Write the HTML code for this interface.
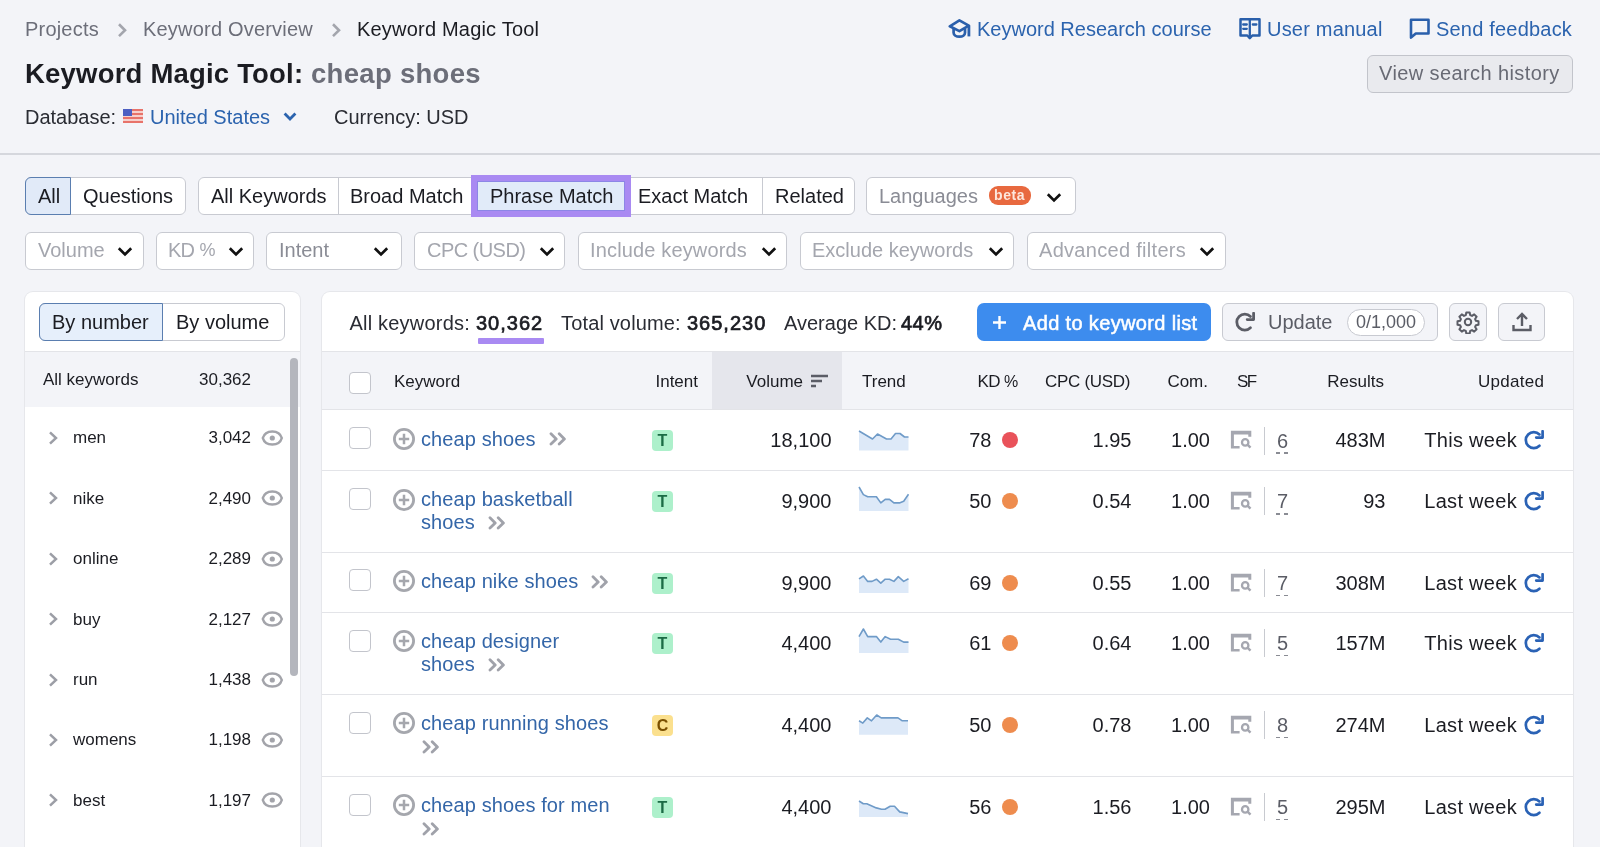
<!DOCTYPE html>
<html><head><meta charset="utf-8">
<style>
*{box-sizing:border-box;margin:0;padding:0}
html,body{width:1600px;height:847px;overflow:hidden;background:#f3f4f8;font-family:"Liberation Sans",sans-serif;color:#1b1c22}
.a{position:absolute}
#root{position:absolute;left:0;top:0;width:1600px;height:847px;will-change:transform}
.t{position:absolute;white-space:nowrap;line-height:1}
.bc{font-size:20px;color:#6c6e79;letter-spacing:0.2px}
.lnk{color:#2b63ae}
.btn{position:absolute;border:1px solid #c8cad1;border-radius:6px;background:#fff}
.seg{position:absolute;top:0;height:100%;border-left:1px solid #c8cad1}
.ph{color:#a4a6ae}
.chev{position:absolute}
</style></head><body><div id="root">

<!-- breadcrumbs -->
<div class="t bc" style="left:25px;top:19px">Projects</div>
<svg class="a" style="left:117px;top:23px" width="11" height="15" viewBox="0 0 11 15"><path d="M2 1.3L8 7.2 2 13.1" fill="none" stroke="#a3a5ad" stroke-width="2.6"/></svg>
<div class="t bc" style="left:143px;top:19px">Keyword Overview</div>
<svg class="a" style="left:331px;top:23px" width="11" height="15" viewBox="0 0 11 15"><path d="M2 1.3L8 7.2 2 13.1" fill="none" stroke="#a3a5ad" stroke-width="2.6"/></svg>
<div class="t bc" style="left:357px;top:19px;color:#1b1c22">Keyword Magic Tool</div>

<!-- top right links -->
<svg class="a" style="left:948px;top:18px" width="24" height="21" viewBox="0 0 24 21"><path d="M1.8 8.3L11.4 2.4l9.4 5.2-9.4 5.5z" fill="none" stroke="#2a5fab" stroke-width="2.7" stroke-linejoin="round"/><path d="M5.6 10.5v4.3c0 2.4 2.6 3.9 5.8 3.9s5.6-1.5 5.6-3.9v-4.3" fill="none" stroke="#2a5fab" stroke-width="2.7"/><path d="M20.9 7.6v10.8" stroke="#2a5fab" stroke-width="2.8"/></svg>
<div class="t bc lnk" style="left:977px;top:19px;letter-spacing:0">Keyword Research course</div>
<svg class="a" style="left:1238px;top:18px" width="24" height="23" viewBox="0 0 24 23"><path d="M2.5 1.3h19v16.2h-7.2l-2.5 2.6-2.5-2.6H2.5z" fill="none" stroke="#2a5fab" stroke-width="2.5" stroke-linejoin="round"/><path d="M11.8 1.3v16.5M5.2 6.5h3.6M5.2 10.8h3.6M14.8 6.5h3.6" stroke="#2a5fab" stroke-width="2.3" stroke-linecap="round"/></svg>
<div class="t bc lnk" style="left:1267px;top:19px">User manual</div>
<svg class="a" style="left:1408px;top:17.5px" width="23" height="22" viewBox="0 0 23 22"><path d="M3 1.8h17.5v13.7H7.8L3 19.6z" fill="none" stroke="#2a5fab" stroke-width="2.6" stroke-linejoin="round"/></svg>
<div class="t bc lnk" style="left:1436px;top:19px">Send feedback</div>

<!-- title -->
<div class="t" style="left:25px;top:60px;font-size:27.5px;letter-spacing:0.2px;font-weight:bold;color:#1b1c22">Keyword Magic Tool:</div>
<div class="t" style="left:311px;top:60px;letter-spacing:0.3px;font-size:27.5px;font-weight:bold;color:#6c6e79">cheap shoes</div>

<div class="btn" style="left:1367px;top:54.5px;width:206px;height:38px;background:#e9eaee;border-color:#c2c4cb"></div>
<div class="t" style="left:1379px;top:63px;font-size:20px;letter-spacing:0.4px;color:#686a74">View search history</div>

<!-- database -->
<div class="t" style="left:25px;top:107px;font-size:20px;color:#2a2c33">Database:</div>
<svg class="a" style="left:123px;top:109px" width="20" height="14" viewBox="0 0 20 14"><rect width="20" height="14" fill="#e8736a"/><rect y="2" width="20" height="2" fill="#f6d0cc"/><rect y="6" width="20" height="2" fill="#f6d0cc"/><rect y="10" width="20" height="2" fill="#f6d0cc"/><rect width="9" height="7" fill="#4d5fc2"/></svg>
<div class="t lnk" style="left:150px;top:107px;font-size:20px">United States</div>
<svg class="a" style="left:283px;top:112px" width="14" height="9" viewBox="0 0 14 9"><path d="M1.6 1.6l5.4 5.4 5.4-5.4" fill="none" stroke="#2b63ae" stroke-width="2.8"/></svg>
<div class="t" style="left:334px;top:107px;font-size:20px;color:#2a2c33">Currency: USD</div>

<div class="a" style="left:0;top:153px;width:1600px;height:2px;background:#d5d7dd"></div>


<!-- tabs row -->
<div class="btn" style="left:25px;top:177px;width:161px;height:38px"></div>
<div class="a" style="left:25px;top:177px;width:46px;height:38px;background:#e1eaf8;border:1px solid #5a7eb0;border-radius:6px 0 0 6px"></div>
<div class="t" style="left:38px;top:186px;font-size:20px">All</div>
<div class="t" style="left:83px;top:186px;font-size:20px">Questions</div>

<div class="btn" style="left:198px;top:177px;width:657px;height:38px"></div>
<div class="a" style="left:338px;top:177px;width:1px;height:38px;background:#c8cad1"></div>
<div class="a" style="left:762px;top:177px;width:1px;height:38px;background:#c8cad1"></div>
<div class="t" style="left:211px;top:186px;font-size:20px">All Keywords</div>
<div class="t" style="left:350px;top:186px;font-size:20px">Broad Match</div>
<div class="a" style="left:471px;top:175px;width:160px;height:42px;background:#e1ebf9;border:6px solid #a98af2"></div>
<div class="a" style="left:477px;top:181px;width:148px;height:30px;border:1px solid #8c86e6"></div>
<div class="t" style="left:490px;top:186px;font-size:20px">Phrase Match</div>
<div class="t" style="left:638px;top:186px;font-size:20px">Exact Match</div>
<div class="t" style="left:775px;top:186px;font-size:20px">Related</div>

<div class="btn" style="left:866px;top:177px;width:210px;height:38px"></div>
<div class="t" style="left:879px;top:186px;font-size:20px;color:#8a8c95">Languages</div>
<div class="a" style="left:989px;top:186px;width:42px;height:19px;border-radius:9px;background:#e8693f"></div>
<div class="t" style="left:994px;top:188px;font-size:14px;font-weight:bold;color:#fde7dc;letter-spacing:0.6px">beta</div>
<svg class="a" style="left:1046px;top:192px" width="16" height="11" viewBox="0 0 16 11"><path d="M1.8 2.2l6.2 6.2 6.2-6.2" fill="none" stroke="#111" stroke-width="2.7"/></svg>

<!-- filters row -->
<div class="btn" style="left:25px;top:232px;width:119px;height:38px"></div>
<div class="t" style="left:38px;top:240px;font-size:20px;color:#a4a6ae">Volume</div>
<svg class="a" style="left:117px;top:246px" width="16" height="11" viewBox="0 0 16 11"><path d="M1.8 2.2l6.2 6.2 6.2-6.2" fill="none" stroke="#111" stroke-width="2.7"/></svg>
<div class="btn" style="left:156px;top:232px;width:98px;height:38px"></div>
<div class="t" style="left:168px;top:240px;font-size:20px;letter-spacing:-0.8px;color:#a4a6ae">KD</div><div class="t" style="left:199.5px;top:241px;font-size:18px;color:#a4a6ae">%</div>
<svg class="a" style="left:228px;top:246px" width="16" height="11" viewBox="0 0 16 11"><path d="M1.8 2.2l6.2 6.2 6.2-6.2" fill="none" stroke="#111" stroke-width="2.7"/></svg>
<div class="btn" style="left:266px;top:232px;width:136px;height:38px"></div>
<div class="t" style="left:279px;top:240px;font-size:20px;color:#8a8c95">Intent</div>
<svg class="a" style="left:373px;top:246px" width="16" height="11" viewBox="0 0 16 11"><path d="M1.8 2.2l6.2 6.2 6.2-6.2" fill="none" stroke="#111" stroke-width="2.7"/></svg>
<div class="btn" style="left:414px;top:232px;width:151px;height:38px"></div>
<div class="t" style="left:427px;top:240px;font-size:20px;letter-spacing:-0.55px;color:#a4a6ae">CPC (USD)</div>
<svg class="a" style="left:539px;top:246px" width="16" height="11" viewBox="0 0 16 11"><path d="M1.8 2.2l6.2 6.2 6.2-6.2" fill="none" stroke="#111" stroke-width="2.7"/></svg>
<div class="btn" style="left:578px;top:232px;width:209px;height:38px"></div>
<div class="t" style="left:590px;top:240px;font-size:20px;letter-spacing:0.15px;color:#a4a6ae">Include keywords</div>
<svg class="a" style="left:761px;top:246px" width="16" height="11" viewBox="0 0 16 11"><path d="M1.8 2.2l6.2 6.2 6.2-6.2" fill="none" stroke="#111" stroke-width="2.7"/></svg>
<div class="btn" style="left:800px;top:232px;width:214px;height:38px"></div>
<div class="t" style="left:812px;top:240px;font-size:20px;color:#a4a6ae">Exclude keywords</div>
<svg class="a" style="left:988px;top:246px" width="16" height="11" viewBox="0 0 16 11"><path d="M1.8 2.2l6.2 6.2 6.2-6.2" fill="none" stroke="#111" stroke-width="2.7"/></svg>
<div class="btn" style="left:1027px;top:232px;width:199px;height:38px"></div>
<div class="t" style="left:1039px;top:240px;font-size:20px;letter-spacing:0.3px;color:#a4a6ae">Advanced filters</div>
<svg class="a" style="left:1199px;top:246px" width="16" height="11" viewBox="0 0 16 11"><path d="M1.8 2.2l6.2 6.2 6.2-6.2" fill="none" stroke="#111" stroke-width="2.7"/></svg>

<!-- left panel -->
<div class="a" style="left:25px;top:292px;width:275px;height:600px;background:#fff;border-radius:8px;box-shadow:0 0 0 1px #e6e7eb"></div>
<div class="btn" style="left:39px;top:303px;width:246px;height:38px"></div>
<div class="a" style="left:39px;top:303px;width:124px;height:38px;background:#e6effb;border:1px solid #5a7eb0;border-radius:6px 0 0 6px"></div>
<div class="t" style="left:52px;top:312px;font-size:20px">By number</div>
<div class="t" style="left:176px;top:312px;font-size:20px">By volume</div>
<div class="a" style="left:25px;top:351px;width:275px;height:1px;background:#e3e4e8"></div>
<div class="a" style="left:25px;top:352px;width:275px;height:55px;background:#f3f4f8"></div>
<div class="t" style="left:43px;top:371px;font-size:17px">All keywords</div>
<div class="t" style="left:151px;top:371px;width:100px;text-align:right;font-size:17px">30,362</div>
<div class="a" style="left:290px;top:358px;width:8px;height:318px;border-radius:4px;background:#b4b6bd"></div>
<svg class="a" style="left:48px;top:431px" width="10" height="14" viewBox="0 0 10 14"><path d="M2 1.3L8 7 2 12.7" fill="none" stroke="#9c9ea6" stroke-width="2.5"/></svg>
<div class="t" style="left:73px;top:429px;font-size:17px">men</div>
<div class="t" style="left:151px;top:429px;width:100px;text-align:right;font-size:17px">3,042</div>
<svg class="a" style="left:261px;top:430px" width="23" height="16" viewBox="0 0 23 16"><path d="M1.8 8C3 3.8 6.5 1.4 11.3 1.4S19.6 3.8 20.8 8C19.6 12.2 16.1 14.6 11.3 14.6S3 12.2 1.8 8z" fill="none" stroke="#a3a4aa" stroke-width="2.5"/><circle cx="11.3" cy="8" r="2.6" fill="#a3a4aa"/></svg>
<svg class="a" style="left:48px;top:491px" width="10" height="14" viewBox="0 0 10 14"><path d="M2 1.3L8 7 2 12.7" fill="none" stroke="#9c9ea6" stroke-width="2.5"/></svg>
<div class="t" style="left:73px;top:490px;font-size:17px">nike</div>
<div class="t" style="left:151px;top:490px;width:100px;text-align:right;font-size:17px">2,490</div>
<svg class="a" style="left:261px;top:490px" width="23" height="16" viewBox="0 0 23 16"><path d="M1.8 8C3 3.8 6.5 1.4 11.3 1.4S19.6 3.8 20.8 8C19.6 12.2 16.1 14.6 11.3 14.6S3 12.2 1.8 8z" fill="none" stroke="#a3a4aa" stroke-width="2.5"/><circle cx="11.3" cy="8" r="2.6" fill="#a3a4aa"/></svg>
<svg class="a" style="left:48px;top:552px" width="10" height="14" viewBox="0 0 10 14"><path d="M2 1.3L8 7 2 12.7" fill="none" stroke="#9c9ea6" stroke-width="2.5"/></svg>
<div class="t" style="left:73px;top:550px;font-size:17px">online</div>
<div class="t" style="left:151px;top:550px;width:100px;text-align:right;font-size:17px">2,289</div>
<svg class="a" style="left:261px;top:551px" width="23" height="16" viewBox="0 0 23 16"><path d="M1.8 8C3 3.8 6.5 1.4 11.3 1.4S19.6 3.8 20.8 8C19.6 12.2 16.1 14.6 11.3 14.6S3 12.2 1.8 8z" fill="none" stroke="#a3a4aa" stroke-width="2.5"/><circle cx="11.3" cy="8" r="2.6" fill="#a3a4aa"/></svg>
<svg class="a" style="left:48px;top:612px" width="10" height="14" viewBox="0 0 10 14"><path d="M2 1.3L8 7 2 12.7" fill="none" stroke="#9c9ea6" stroke-width="2.5"/></svg>
<div class="t" style="left:73px;top:611px;font-size:17px">buy</div>
<div class="t" style="left:151px;top:611px;width:100px;text-align:right;font-size:17px">2,127</div>
<svg class="a" style="left:261px;top:611px" width="23" height="16" viewBox="0 0 23 16"><path d="M1.8 8C3 3.8 6.5 1.4 11.3 1.4S19.6 3.8 20.8 8C19.6 12.2 16.1 14.6 11.3 14.6S3 12.2 1.8 8z" fill="none" stroke="#a3a4aa" stroke-width="2.5"/><circle cx="11.3" cy="8" r="2.6" fill="#a3a4aa"/></svg>
<svg class="a" style="left:48px;top:673px" width="10" height="14" viewBox="0 0 10 14"><path d="M2 1.3L8 7 2 12.7" fill="none" stroke="#9c9ea6" stroke-width="2.5"/></svg>
<div class="t" style="left:73px;top:671px;font-size:17px">run</div>
<div class="t" style="left:151px;top:671px;width:100px;text-align:right;font-size:17px">1,438</div>
<svg class="a" style="left:261px;top:672px" width="23" height="16" viewBox="0 0 23 16"><path d="M1.8 8C3 3.8 6.5 1.4 11.3 1.4S19.6 3.8 20.8 8C19.6 12.2 16.1 14.6 11.3 14.6S3 12.2 1.8 8z" fill="none" stroke="#a3a4aa" stroke-width="2.5"/><circle cx="11.3" cy="8" r="2.6" fill="#a3a4aa"/></svg>
<svg class="a" style="left:48px;top:733px" width="10" height="14" viewBox="0 0 10 14"><path d="M2 1.3L8 7 2 12.7" fill="none" stroke="#9c9ea6" stroke-width="2.5"/></svg>
<div class="t" style="left:73px;top:731px;font-size:17px">womens</div>
<div class="t" style="left:151px;top:731px;width:100px;text-align:right;font-size:17px">1,198</div>
<svg class="a" style="left:261px;top:732px" width="23" height="16" viewBox="0 0 23 16"><path d="M1.8 8C3 3.8 6.5 1.4 11.3 1.4S19.6 3.8 20.8 8C19.6 12.2 16.1 14.6 11.3 14.6S3 12.2 1.8 8z" fill="none" stroke="#a3a4aa" stroke-width="2.5"/><circle cx="11.3" cy="8" r="2.6" fill="#a3a4aa"/></svg>
<svg class="a" style="left:48px;top:793px" width="10" height="14" viewBox="0 0 10 14"><path d="M2 1.3L8 7 2 12.7" fill="none" stroke="#9c9ea6" stroke-width="2.5"/></svg>
<div class="t" style="left:73px;top:792px;font-size:17px">best</div>
<div class="t" style="left:151px;top:792px;width:100px;text-align:right;font-size:17px">1,197</div>
<svg class="a" style="left:261px;top:792px" width="23" height="16" viewBox="0 0 23 16"><path d="M1.8 8C3 3.8 6.5 1.4 11.3 1.4S19.6 3.8 20.8 8C19.6 12.2 16.1 14.6 11.3 14.6S3 12.2 1.8 8z" fill="none" stroke="#a3a4aa" stroke-width="2.5"/><circle cx="11.3" cy="8" r="2.6" fill="#a3a4aa"/></svg>

<!-- right panel -->
<div class="a" style="left:322px;top:292px;width:1251px;height:600px;background:#fff;border-radius:8px;box-shadow:0 0 0 1px #e6e7eb"></div>
<div class="t" style="left:349.5px;top:313px;font-size:20px;letter-spacing:0.2px;color:#2a2c33">All keywords:</div>
<div class="t" style="left:476px;top:313px;font-size:20px;letter-spacing:1px;-webkit-text-stroke:0.7px #1b1c22;color:#1b1c22">30,362</div>
<div class="a" style="left:478px;top:338px;width:66px;height:6px;background:#a98af2;border-radius:1px"></div>
<div class="t" style="left:561px;top:313px;font-size:20px;letter-spacing:0.15px;color:#2a2c33">Total volume:</div>
<div class="t" style="left:687px;top:313px;font-size:20px;letter-spacing:1px;-webkit-text-stroke:0.7px #1b1c22;color:#1b1c22">365,230</div>
<div class="t" style="left:784px;top:313px;font-size:20px;color:#2a2c33">Average KD:</div>
<div class="t" style="left:901px;top:313px;font-size:20px;letter-spacing:0.5px;-webkit-text-stroke:0.7px #1b1c22;color:#1b1c22">44%</div>

<div class="a" style="left:977px;top:303px;width:234px;height:38px;background:#3d8cee;border-radius:7px"></div>
<svg class="a" style="left:992px;top:315px" width="15" height="15" viewBox="0 0 15 15"><path d="M7.5 1v13M1 7.5h13" stroke="#fff" stroke-width="2.4"/></svg>
<div class="t" style="left:1023px;top:313px;font-size:20px;color:#fff;letter-spacing:0.35px;-webkit-text-stroke:0.5px #fff">Add to keyword list</div>

<div class="btn" style="left:1222px;top:303px;width:216px;height:38px;background:#f3f4f8"></div>
<svg class="a" style="left:1234px;top:312.3px" width="22" height="21" viewBox="0 0 22 21"><path d="M16.46 4.44A8 8 0 1 0 16.46 15.76" fill="none" stroke="#5b5d66" stroke-width="2.8" stroke-linecap="round"/><path d="M19.6 1.2V7.6H13.2" fill="none" stroke="#5b5d66" stroke-width="2.8" stroke-linecap="round" stroke-linejoin="round"/></svg>
<div class="t" style="left:1268px;top:312px;font-size:20px;color:#5b5d66">Update</div>
<div class="a" style="left:1347px;top:309px;width:78px;height:27px;border:1px solid #c8cad1;border-radius:14px;background:#fff"></div>
<div class="t" style="left:1356px;top:313px;font-size:18px;color:#5b5d66">0/1,000</div>

<div class="btn" style="left:1449px;top:303px;width:38px;height:38px;background:#f3f4f8"></div>
<svg class="a" style="left:1456px;top:310px" width="24" height="24" viewBox="0 0 24 24"><path d="M10.3 2.5h3.4l.5 2.6 1.8.8 2.2-1.5 2.4 2.4-1.5 2.2.8 1.8 2.6.5v3.4l-2.6.5-.8 1.8 1.5 2.2-2.4 2.4-2.2-1.5-1.8.8-.5 2.6h-3.4l-.5-2.6-1.8-.8-2.2 1.5-2.4-2.4 1.5-2.2-.8-1.8-2.6-.5v-3.4l2.6-.5.8-1.8-1.5-2.2 2.4-2.4 2.2 1.5 1.8-.8z" fill="none" stroke="#5b5d66" stroke-width="2" stroke-linejoin="round"/><circle cx="12" cy="12" r="3.2" fill="none" stroke="#5b5d66" stroke-width="2"/></svg>
<div class="btn" style="left:1498px;top:303px;width:47px;height:38px;background:#f3f4f8"></div>
<svg class="a" style="left:1511px;top:311px" width="22" height="22" viewBox="0 0 22 22"><path d="M11 15V3M6 8l5-5 5 5" fill="none" stroke="#5b5d66" stroke-width="2.4"/><path d="M2.5 14v5h17v-5" fill="none" stroke="#5b5d66" stroke-width="2.4"/></svg>

<!-- table header -->
<div class="a" style="left:322px;top:351px;width:1251px;height:1px;background:#e3e4e8"></div>
<div class="a" style="left:322px;top:352px;width:1251px;height:57px;background:#f3f4f8"></div>
<div class="a" style="left:712px;top:352px;width:130px;height:57px;background:#e5e6ec"></div>
<div class="a" style="left:322px;top:409px;width:1251px;height:1px;background:#e3e4e8"></div>
<div class="a" style="left:349px;top:372px;width:22px;height:22px;border:1.5px solid #c3c5cc;border-radius:4px;background:#fff"></div>
<div class="t" style="left:394px;top:373px;font-size:17px">Keyword</div>
<div class="t" style="left:548px;top:373px;width:150px;text-align:right;font-size:17px">Intent</div>
<div class="t" style="left:653px;top:373px;width:150px;text-align:right;font-size:17px">Volume</div>
<div class="t" style="left:862px;top:373px;font-size:17px">Trend</div>
<div class="t" style="left:977.5px;top:373px;font-size:17px;letter-spacing:-0.7px">KD</div><div class="t" style="left:1004px;top:373.5px;font-size:16px">%</div>
<div class="t" style="left:1045px;top:373px;font-size:17px;letter-spacing:-0.3px">CPC (USD)</div>
<div class="t" style="left:1058px;top:373px;width:150px;text-align:right;font-size:17px">Com.</div>
<div class="t" style="left:1237px;top:373px;font-size:17px;letter-spacing:-1.5px">SF</div>
<div class="t" style="left:1234px;top:373px;width:150px;text-align:right;font-size:17px">Results</div>
<div class="t" style="left:1478px;top:373px;font-size:17px;letter-spacing:0.3px">Updated</div>
<svg class="a" style="left:811px;top:374px" width="18" height="14" viewBox="0 0 18 14"><path d="M0 2h17M0 7h11M0 12h5" stroke="#5b5d66" stroke-width="2.4"/></svg>

<!-- table rows -->
<div class="a" style="left:349px;top:427px;width:22px;height:22px;border:1.5px solid #c3c5cc;border-radius:4px;background:#fff"></div>
<svg class="a" style="left:392px;top:426.9px" width="24" height="24" viewBox="0 0 24 24"><circle cx="12" cy="12" r="9.6" fill="none" stroke="#a5a7ad" stroke-width="2.8"/><path d="M12 6.8v10.4M6.8 12h10.4" stroke="#a5a7ad" stroke-width="2.5"/></svg>
<div class="t" style="left:421px;top:428.6px;font-size:20px;letter-spacing:0.1px;color:#3466a8">cheap shoes</div>
<svg class="a" style="left:548.5px;top:432.2px" width="18" height="14" viewBox="0 0 18 14"><path d="M2 1.8L7.2 6.9 2 12M10.2 1.8L15.4 6.9 10.2 12" fill="none" stroke="#a0a2aa" stroke-width="2.8" stroke-linecap="round" stroke-linejoin="round"/></svg>
<div class="a" style="left:652px;top:430.2px;width:21px;height:21px;border-radius:4px;background:#adf0cb;color:#1b6b45;font-size:16px;font-weight:bold;line-height:21px;text-align:center">T</div>
<div class="t" style="left:731.5px;top:430.4px;width:100px;text-align:right;font-size:20px">18,100</div>
<svg class="a" style="left:857.5px;top:429.0px" width="52" height="21.5" viewBox="0 0 52 21.5"><path d="M1,21.5 L1.0,2.0 L14.5,10.0 L19.5,5.0 L28.5,10.0 L33.0,10.0 L37.5,4.5 L42.0,4.5 L46.5,8.0 L50.5,8.0 L50.5,21.5 Z" fill="#dde9f8"/><polyline points="1.0,2.0 14.5,10.0 19.5,5.0 28.5,10.0 33.0,10.0 37.5,4.5 42.0,4.5 46.5,8.0 50.5,8.0" fill="none" stroke="#6f9bc8" stroke-width="1.6" stroke-linejoin="round"/></svg>
<div class="t" style="left:941.5px;top:430.4px;width:50px;text-align:right;font-size:20px">78</div>
<div class="a" style="left:1002.4px;top:432.4px;width:16px;height:16px;border-radius:50%;background:#e9525a"></div>
<div class="t" style="left:1031.5px;top:430.4px;width:100px;text-align:right;font-size:20px">1.95</div>
<div class="t" style="left:1110px;top:430.4px;width:100px;text-align:right;font-size:20px">1.00</div>
<svg class="a" style="left:1230px;top:430.2px" width="23" height="20" viewBox="0 0 23 20"><path d="M0.9 0.7h20.4v6.1h-3V4.4H3.9v11.6h5.7v2.5H0.9z" fill="#a5a7b0"/><circle cx="15.2" cy="12.4" r="3.2" fill="none" stroke="#a5a7b0" stroke-width="2.3"/><path d="M17.5 14.7l3 3" stroke="#a5a7b0" stroke-width="2.5"/></svg>
<div class="a" style="left:1264px;top:426.7px;width:1px;height:28px;background:#c8cad0"></div>
<div class="t" style="left:1277px;top:430.7px;font-size:20px;color:#5b5d66">6</div>
<div class="a" style="left:1275.5px;top:452.4px;width:12px;height:1.5px;background:repeating-linear-gradient(90deg,#8a8c94 0 4px,transparent 4px 8px)"></div>
<div class="t" style="left:1285.5px;top:430.4px;width:100px;text-align:right;font-size:20px">483M</div>
<div class="t" style="left:1417px;top:430.4px;width:100px;text-align:right;font-size:20px;letter-spacing:0.3px">This week</div>
<svg class="a" style="left:1523px;top:430.2px" width="22" height="21" viewBox="0 0 22 21"><path d="M16.46 4.44A8 8 0 1 0 16.46 15.76" fill="none" stroke="#2a62b5" stroke-width="2.7" stroke-linecap="round"/><path d="M19.6 1.2V7.6H13.2" fill="none" stroke="#2a62b5" stroke-width="2.7" stroke-linecap="round" stroke-linejoin="round"/></svg>
<div class="a" style="left:322px;top:470px;width:1251px;height:1px;background:#e3e4e8"></div>
<div class="a" style="left:349px;top:488px;width:22px;height:22px;border:1.5px solid #c3c5cc;border-radius:4px;background:#fff"></div>
<svg class="a" style="left:392px;top:487.5px" width="24" height="24" viewBox="0 0 24 24"><circle cx="12" cy="12" r="9.6" fill="none" stroke="#a5a7ad" stroke-width="2.8"/><path d="M12 6.8v10.4M6.8 12h10.4" stroke="#a5a7ad" stroke-width="2.5"/></svg>
<div class="t" style="left:421px;top:489.2px;font-size:20px;letter-spacing:0.1px;color:#3466a8">cheap basketball</div>
<div class="t" style="left:421px;top:512.2px;font-size:20px;letter-spacing:0.1px;color:#3466a8">shoes</div>
<svg class="a" style="left:487.9px;top:515.8px" width="18" height="14" viewBox="0 0 18 14"><path d="M2 1.8L7.2 6.9 2 12M10.2 1.8L15.4 6.9 10.2 12" fill="none" stroke="#a0a2aa" stroke-width="2.8" stroke-linecap="round" stroke-linejoin="round"/></svg>
<div class="a" style="left:652px;top:490.8px;width:21px;height:21px;border-radius:4px;background:#adf0cb;color:#1b6b45;font-size:16px;font-weight:bold;line-height:21px;text-align:center">T</div>
<div class="t" style="left:731.5px;top:491.0px;width:100px;text-align:right;font-size:20px">9,900</div>
<svg class="a" style="left:857.5px;top:485.0px" width="52" height="26.0" viewBox="0 0 52 26.0"><path d="M1,26.0 L1.0,2.0 L5.4,9.6 L9.7,11.8 L18.4,11.8 L22.8,17.9 L27.2,14.4 L31.5,14.4 L35.9,17.9 L41.4,17.9 L45.7,16.2 L50.5,9.2 L50.5,26.0 Z" fill="#dde9f8"/><polyline points="1.0,2.0 5.4,9.6 9.7,11.8 18.4,11.8 22.8,17.9 27.2,14.4 31.5,14.4 35.9,17.9 41.4,17.9 45.7,16.2 50.5,9.2" fill="none" stroke="#6f9bc8" stroke-width="1.6" stroke-linejoin="round"/></svg>
<div class="t" style="left:941.5px;top:491.0px;width:50px;text-align:right;font-size:20px">50</div>
<div class="a" style="left:1002.4px;top:493.0px;width:16px;height:16px;border-radius:50%;background:#ee8c4e"></div>
<div class="t" style="left:1031.5px;top:491.0px;width:100px;text-align:right;font-size:20px">0.54</div>
<div class="t" style="left:1110px;top:491.0px;width:100px;text-align:right;font-size:20px">1.00</div>
<svg class="a" style="left:1230px;top:490.8px" width="23" height="20" viewBox="0 0 23 20"><path d="M0.9 0.7h20.4v6.1h-3V4.4H3.9v11.6h5.7v2.5H0.9z" fill="#a5a7b0"/><circle cx="15.2" cy="12.4" r="3.2" fill="none" stroke="#a5a7b0" stroke-width="2.3"/><path d="M17.5 14.7l3 3" stroke="#a5a7b0" stroke-width="2.5"/></svg>
<div class="a" style="left:1264px;top:487.3px;width:1px;height:28px;background:#c8cad0"></div>
<div class="t" style="left:1277px;top:491.3px;font-size:20px;color:#5b5d66">7</div>
<div class="a" style="left:1275.5px;top:513.0px;width:12px;height:1.5px;background:repeating-linear-gradient(90deg,#8a8c94 0 4px,transparent 4px 8px)"></div>
<div class="t" style="left:1285.5px;top:491.0px;width:100px;text-align:right;font-size:20px">93</div>
<div class="t" style="left:1417px;top:491.0px;width:100px;text-align:right;font-size:20px;letter-spacing:0.3px">Last week</div>
<svg class="a" style="left:1523px;top:490.8px" width="22" height="21" viewBox="0 0 22 21"><path d="M16.46 4.44A8 8 0 1 0 16.46 15.76" fill="none" stroke="#2a62b5" stroke-width="2.7" stroke-linecap="round"/><path d="M19.6 1.2V7.6H13.2" fill="none" stroke="#2a62b5" stroke-width="2.7" stroke-linecap="round" stroke-linejoin="round"/></svg>
<div class="a" style="left:322px;top:552px;width:1251px;height:1px;background:#e3e4e8"></div>
<div class="a" style="left:349px;top:569px;width:22px;height:22px;border:1.5px solid #c3c5cc;border-radius:4px;background:#fff"></div>
<svg class="a" style="left:392px;top:569.2px" width="24" height="24" viewBox="0 0 24 24"><circle cx="12" cy="12" r="9.6" fill="none" stroke="#a5a7ad" stroke-width="2.8"/><path d="M12 6.8v10.4M6.8 12h10.4" stroke="#a5a7ad" stroke-width="2.5"/></svg>
<div class="t" style="left:421px;top:570.9px;font-size:20px;letter-spacing:0.1px;color:#3466a8">cheap nike shoes</div>
<svg class="a" style="left:591.3px;top:574.5px" width="18" height="14" viewBox="0 0 18 14"><path d="M2 1.8L7.2 6.9 2 12M10.2 1.8L15.4 6.9 10.2 12" fill="none" stroke="#a0a2aa" stroke-width="2.8" stroke-linecap="round" stroke-linejoin="round"/></svg>
<div class="a" style="left:652px;top:572.5px;width:21px;height:21px;border-radius:4px;background:#adf0cb;color:#1b6b45;font-size:16px;font-weight:bold;line-height:21px;text-align:center">T</div>
<div class="t" style="left:731.5px;top:572.7px;width:100px;text-align:right;font-size:20px">9,900</div>
<svg class="a" style="left:857.5px;top:573.8px" width="52" height="19.0" viewBox="0 0 52 19.0"><path d="M1,19.0 L1.0,4.8 L5.4,2.0 L9.7,7.4 L14.0,7.4 L18.4,5.2 L22.8,9.2 L27.2,5.2 L31.5,5.2 L35.9,7.4 L40.3,2.6 L45.7,7.4 L50.5,4.8 L50.5,19.0 Z" fill="#dde9f8"/><polyline points="1.0,4.8 5.4,2.0 9.7,7.4 14.0,7.4 18.4,5.2 22.8,9.2 27.2,5.2 31.5,5.2 35.9,7.4 40.3,2.6 45.7,7.4 50.5,4.8" fill="none" stroke="#6f9bc8" stroke-width="1.6" stroke-linejoin="round"/></svg>
<div class="t" style="left:941.5px;top:572.7px;width:50px;text-align:right;font-size:20px">69</div>
<div class="a" style="left:1002.4px;top:574.7px;width:16px;height:16px;border-radius:50%;background:#ee8c4e"></div>
<div class="t" style="left:1031.5px;top:572.7px;width:100px;text-align:right;font-size:20px">0.55</div>
<div class="t" style="left:1110px;top:572.7px;width:100px;text-align:right;font-size:20px">1.00</div>
<svg class="a" style="left:1230px;top:572.5px" width="23" height="20" viewBox="0 0 23 20"><path d="M0.9 0.7h20.4v6.1h-3V4.4H3.9v11.6h5.7v2.5H0.9z" fill="#a5a7b0"/><circle cx="15.2" cy="12.4" r="3.2" fill="none" stroke="#a5a7b0" stroke-width="2.3"/><path d="M17.5 14.7l3 3" stroke="#a5a7b0" stroke-width="2.5"/></svg>
<div class="a" style="left:1264px;top:569.0px;width:1px;height:28px;background:#c8cad0"></div>
<div class="t" style="left:1277px;top:573.0px;font-size:20px;color:#5b5d66">7</div>
<div class="a" style="left:1275.5px;top:594.7px;width:12px;height:1.5px;background:repeating-linear-gradient(90deg,#8a8c94 0 4px,transparent 4px 8px)"></div>
<div class="t" style="left:1285.5px;top:572.7px;width:100px;text-align:right;font-size:20px">308M</div>
<div class="t" style="left:1417px;top:572.7px;width:100px;text-align:right;font-size:20px;letter-spacing:0.3px">Last week</div>
<svg class="a" style="left:1523px;top:572.5px" width="22" height="21" viewBox="0 0 22 21"><path d="M16.46 4.44A8 8 0 1 0 16.46 15.76" fill="none" stroke="#2a62b5" stroke-width="2.7" stroke-linecap="round"/><path d="M19.6 1.2V7.6H13.2" fill="none" stroke="#2a62b5" stroke-width="2.7" stroke-linecap="round" stroke-linejoin="round"/></svg>
<div class="a" style="left:322px;top:612px;width:1251px;height:1px;background:#e3e4e8"></div>
<div class="a" style="left:349px;top:630px;width:22px;height:22px;border:1.5px solid #c3c5cc;border-radius:4px;background:#fff"></div>
<svg class="a" style="left:392px;top:629.4px" width="24" height="24" viewBox="0 0 24 24"><circle cx="12" cy="12" r="9.6" fill="none" stroke="#a5a7ad" stroke-width="2.8"/><path d="M12 6.8v10.4M6.8 12h10.4" stroke="#a5a7ad" stroke-width="2.5"/></svg>
<div class="t" style="left:421px;top:631.1px;font-size:20px;letter-spacing:0.1px;color:#3466a8">cheap designer</div>
<div class="t" style="left:421px;top:654.1px;font-size:20px;letter-spacing:0.1px;color:#3466a8">shoes</div>
<svg class="a" style="left:487.9px;top:657.7px" width="18" height="14" viewBox="0 0 18 14"><path d="M2 1.8L7.2 6.9 2 12M10.2 1.8L15.4 6.9 10.2 12" fill="none" stroke="#a0a2aa" stroke-width="2.8" stroke-linecap="round" stroke-linejoin="round"/></svg>
<div class="a" style="left:652px;top:632.7px;width:21px;height:21px;border-radius:4px;background:#adf0cb;color:#1b6b45;font-size:16px;font-weight:bold;line-height:21px;text-align:center">T</div>
<div class="t" style="left:731.5px;top:632.9px;width:100px;text-align:right;font-size:20px">4,400</div>
<svg class="a" style="left:857.5px;top:626.8px" width="52" height="26.0" viewBox="0 0 52 26.0"><path d="M1,26.0 L1.0,9.6 L5.4,2.0 L9.7,9.6 L18.4,9.6 L22.8,15.1 L27.2,9.6 L32.6,12.2 L40.3,12.2 L45.7,15.1 L50.5,15.1 L50.5,26.0 Z" fill="#dde9f8"/><polyline points="1.0,9.6 5.4,2.0 9.7,9.6 18.4,9.6 22.8,15.1 27.2,9.6 32.6,12.2 40.3,12.2 45.7,15.1 50.5,15.1" fill="none" stroke="#6f9bc8" stroke-width="1.6" stroke-linejoin="round"/></svg>
<div class="t" style="left:941.5px;top:632.9px;width:50px;text-align:right;font-size:20px">61</div>
<div class="a" style="left:1002.4px;top:634.9px;width:16px;height:16px;border-radius:50%;background:#ee8c4e"></div>
<div class="t" style="left:1031.5px;top:632.9px;width:100px;text-align:right;font-size:20px">0.64</div>
<div class="t" style="left:1110px;top:632.9px;width:100px;text-align:right;font-size:20px">1.00</div>
<svg class="a" style="left:1230px;top:632.7px" width="23" height="20" viewBox="0 0 23 20"><path d="M0.9 0.7h20.4v6.1h-3V4.4H3.9v11.6h5.7v2.5H0.9z" fill="#a5a7b0"/><circle cx="15.2" cy="12.4" r="3.2" fill="none" stroke="#a5a7b0" stroke-width="2.3"/><path d="M17.5 14.7l3 3" stroke="#a5a7b0" stroke-width="2.5"/></svg>
<div class="a" style="left:1264px;top:629.2px;width:1px;height:28px;background:#c8cad0"></div>
<div class="t" style="left:1277px;top:633.2px;font-size:20px;color:#5b5d66">5</div>
<div class="a" style="left:1275.5px;top:654.9px;width:12px;height:1.5px;background:repeating-linear-gradient(90deg,#8a8c94 0 4px,transparent 4px 8px)"></div>
<div class="t" style="left:1285.5px;top:632.9px;width:100px;text-align:right;font-size:20px">157M</div>
<div class="t" style="left:1417px;top:632.9px;width:100px;text-align:right;font-size:20px;letter-spacing:0.3px">This week</div>
<svg class="a" style="left:1523px;top:632.7px" width="22" height="21" viewBox="0 0 22 21"><path d="M16.46 4.44A8 8 0 1 0 16.46 15.76" fill="none" stroke="#2a62b5" stroke-width="2.7" stroke-linecap="round"/><path d="M19.6 1.2V7.6H13.2" fill="none" stroke="#2a62b5" stroke-width="2.7" stroke-linecap="round" stroke-linejoin="round"/></svg>
<div class="a" style="left:322px;top:694px;width:1251px;height:1px;background:#e3e4e8"></div>
<div class="a" style="left:349px;top:712px;width:22px;height:22px;border:1.5px solid #c3c5cc;border-radius:4px;background:#fff"></div>
<svg class="a" style="left:392px;top:711.4px" width="24" height="24" viewBox="0 0 24 24"><circle cx="12" cy="12" r="9.6" fill="none" stroke="#a5a7ad" stroke-width="2.8"/><path d="M12 6.8v10.4M6.8 12h10.4" stroke="#a5a7ad" stroke-width="2.5"/></svg>
<div class="t" style="left:421px;top:713.1px;font-size:20px;letter-spacing:0.1px;color:#3466a8">cheap running shoes</div>
<svg class="a" style="left:422.0px;top:739.7px" width="18" height="14" viewBox="0 0 18 14"><path d="M2 1.8L7.2 6.9 2 12M10.2 1.8L15.4 6.9 10.2 12" fill="none" stroke="#a0a2aa" stroke-width="2.8" stroke-linecap="round" stroke-linejoin="round"/></svg>
<div class="a" style="left:652px;top:714.7px;width:21px;height:21px;border-radius:4px;background:#fbe08e;color:#7a4f00;font-size:16px;font-weight:bold;line-height:21px;text-align:center">C</div>
<div class="t" style="left:731.5px;top:714.9px;width:100px;text-align:right;font-size:20px">4,400</div>
<svg class="a" style="left:857.5px;top:713.3px" width="52" height="21.7" viewBox="0 0 52 21.7"><path d="M1,21.7 L1.0,7.8 L4.8,10.1 L9.3,4.9 L13.5,7.8 L18.7,2.0 L23.2,4.9 L40.0,4.9 L44.3,7.8 L50.0,7.8 L50.0,21.7 Z" fill="#dde9f8"/><polyline points="1.0,7.8 4.8,10.1 9.3,4.9 13.5,7.8 18.7,2.0 23.2,4.9 40.0,4.9 44.3,7.8 50.0,7.8" fill="none" stroke="#6f9bc8" stroke-width="1.6" stroke-linejoin="round"/></svg>
<div class="t" style="left:941.5px;top:714.9px;width:50px;text-align:right;font-size:20px">50</div>
<div class="a" style="left:1002.4px;top:716.9px;width:16px;height:16px;border-radius:50%;background:#ee8c4e"></div>
<div class="t" style="left:1031.5px;top:714.9px;width:100px;text-align:right;font-size:20px">0.78</div>
<div class="t" style="left:1110px;top:714.9px;width:100px;text-align:right;font-size:20px">1.00</div>
<svg class="a" style="left:1230px;top:714.7px" width="23" height="20" viewBox="0 0 23 20"><path d="M0.9 0.7h20.4v6.1h-3V4.4H3.9v11.6h5.7v2.5H0.9z" fill="#a5a7b0"/><circle cx="15.2" cy="12.4" r="3.2" fill="none" stroke="#a5a7b0" stroke-width="2.3"/><path d="M17.5 14.7l3 3" stroke="#a5a7b0" stroke-width="2.5"/></svg>
<div class="a" style="left:1264px;top:711.2px;width:1px;height:28px;background:#c8cad0"></div>
<div class="t" style="left:1277px;top:715.2px;font-size:20px;color:#5b5d66">8</div>
<div class="a" style="left:1275.5px;top:736.9px;width:12px;height:1.5px;background:repeating-linear-gradient(90deg,#8a8c94 0 4px,transparent 4px 8px)"></div>
<div class="t" style="left:1285.5px;top:714.9px;width:100px;text-align:right;font-size:20px">274M</div>
<div class="t" style="left:1417px;top:714.9px;width:100px;text-align:right;font-size:20px;letter-spacing:0.3px">Last week</div>
<svg class="a" style="left:1523px;top:714.7px" width="22" height="21" viewBox="0 0 22 21"><path d="M16.46 4.44A8 8 0 1 0 16.46 15.76" fill="none" stroke="#2a62b5" stroke-width="2.7" stroke-linecap="round"/><path d="M19.6 1.2V7.6H13.2" fill="none" stroke="#2a62b5" stroke-width="2.7" stroke-linecap="round" stroke-linejoin="round"/></svg>
<div class="a" style="left:322px;top:776px;width:1251px;height:1px;background:#e3e4e8"></div>
<div class="a" style="left:349px;top:794px;width:22px;height:22px;border:1.5px solid #c3c5cc;border-radius:4px;background:#fff"></div>
<svg class="a" style="left:392px;top:793.3px" width="24" height="24" viewBox="0 0 24 24"><circle cx="12" cy="12" r="9.6" fill="none" stroke="#a5a7ad" stroke-width="2.8"/><path d="M12 6.8v10.4M6.8 12h10.4" stroke="#a5a7ad" stroke-width="2.5"/></svg>
<div class="t" style="left:421px;top:795.0px;font-size:20px;letter-spacing:0.1px;color:#3466a8">cheap shoes for men</div>
<svg class="a" style="left:422.0px;top:821.6px" width="18" height="14" viewBox="0 0 18 14"><path d="M2 1.8L7.2 6.9 2 12M10.2 1.8L15.4 6.9 10.2 12" fill="none" stroke="#a0a2aa" stroke-width="2.8" stroke-linecap="round" stroke-linejoin="round"/></svg>
<div class="a" style="left:652px;top:796.6px;width:21px;height:21px;border-radius:4px;background:#adf0cb;color:#1b6b45;font-size:16px;font-weight:bold;line-height:21px;text-align:center">T</div>
<div class="t" style="left:731.5px;top:796.8px;width:100px;text-align:right;font-size:20px">4,400</div>
<svg class="a" style="left:857.5px;top:798.9px" width="52" height="18.6" viewBox="0 0 52 18.6"><path d="M1,18.6 L1.0,2.0 L5.3,4.7 L8.8,4.7 L18.3,8.9 L23.5,10.3 L27.0,10.3 L32.2,7.2 L36.5,7.2 L41.7,12.9 L50.0,14.6 L50.0,18.6 Z" fill="#dde9f8"/><polyline points="1.0,2.0 5.3,4.7 8.8,4.7 18.3,8.9 23.5,10.3 27.0,10.3 32.2,7.2 36.5,7.2 41.7,12.9 50.0,14.6" fill="none" stroke="#6f9bc8" stroke-width="1.6" stroke-linejoin="round"/></svg>
<div class="t" style="left:941.5px;top:796.8px;width:50px;text-align:right;font-size:20px">56</div>
<div class="a" style="left:1002.4px;top:798.8px;width:16px;height:16px;border-radius:50%;background:#ee8c4e"></div>
<div class="t" style="left:1031.5px;top:796.8px;width:100px;text-align:right;font-size:20px">1.56</div>
<div class="t" style="left:1110px;top:796.8px;width:100px;text-align:right;font-size:20px">1.00</div>
<svg class="a" style="left:1230px;top:796.6px" width="23" height="20" viewBox="0 0 23 20"><path d="M0.9 0.7h20.4v6.1h-3V4.4H3.9v11.6h5.7v2.5H0.9z" fill="#a5a7b0"/><circle cx="15.2" cy="12.4" r="3.2" fill="none" stroke="#a5a7b0" stroke-width="2.3"/><path d="M17.5 14.7l3 3" stroke="#a5a7b0" stroke-width="2.5"/></svg>
<div class="a" style="left:1264px;top:793.1px;width:1px;height:28px;background:#c8cad0"></div>
<div class="t" style="left:1277px;top:797.1px;font-size:20px;color:#5b5d66">5</div>
<div class="a" style="left:1275.5px;top:818.8px;width:12px;height:1.5px;background:repeating-linear-gradient(90deg,#8a8c94 0 4px,transparent 4px 8px)"></div>
<div class="t" style="left:1285.5px;top:796.8px;width:100px;text-align:right;font-size:20px">295M</div>
<div class="t" style="left:1417px;top:796.8px;width:100px;text-align:right;font-size:20px;letter-spacing:0.3px">Last week</div>
<svg class="a" style="left:1523px;top:796.6px" width="22" height="21" viewBox="0 0 22 21"><path d="M16.46 4.44A8 8 0 1 0 16.46 15.76" fill="none" stroke="#2a62b5" stroke-width="2.7" stroke-linecap="round"/><path d="M19.6 1.2V7.6H13.2" fill="none" stroke="#2a62b5" stroke-width="2.7" stroke-linecap="round" stroke-linejoin="round"/></svg>

</div></body></html>
